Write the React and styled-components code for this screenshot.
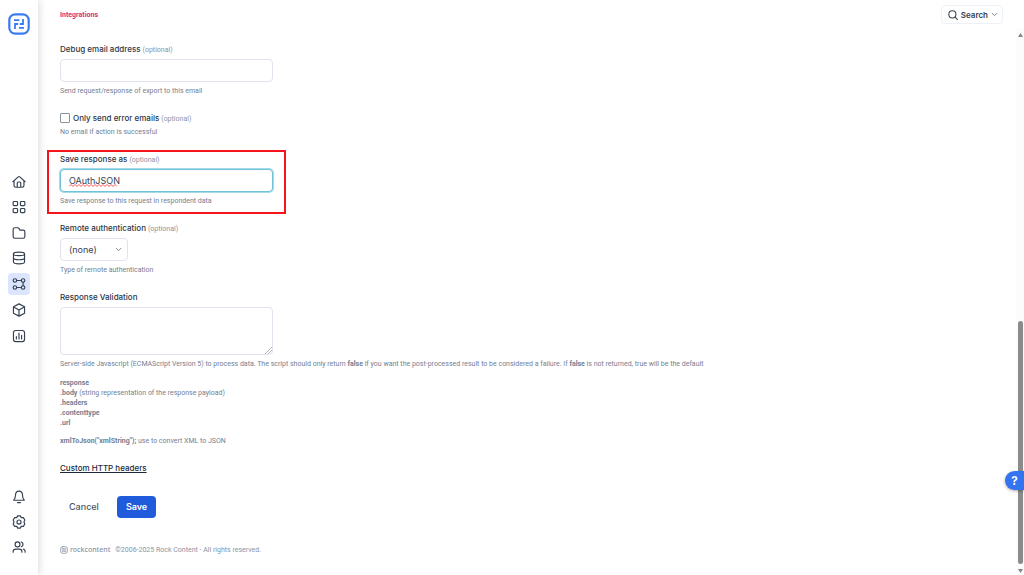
import styled, { createGlobalStyle, css } from "styled-components";

const GlobalStyle = createGlobalStyle`
  * {
    box-sizing: border-box;
  }
  body {
    margin: 0;
    background: #fff;
    color: #364152;
    font-family: Inter, "Liberation Sans", sans-serif;
    font-size: 9px;
    line-height: 12px;
  }
  button, input, select, textarea {
    font: inherit;
    color: inherit;
    margin: 0;
  }
`;

const smallText = css`
  font-family: Roboto, "Liberation Sans", sans-serif;
  font-size: 7px;
  line-height: 10px;
`;

const Page = styled.div`
  display: flex;
  min-height: 100vh;
`;

const Sidebar = styled.nav`
  display: flex;
  flex-direction: column;
  align-items: center;
  flex: none;
  width: 38px;
  padding: 13px 0 18px;
  box-shadow: 1px 0 8px rgba(16, 24, 40, 0.16);
`;

const NavGroup = styled.div`
  display: flex;
  flex-direction: column;
  gap: 4px;
  padding-top: 4px;
`;

const MainNav = styled(NavGroup)`
  justify-content: space-between;
  gap: 0;
  height: 175px;
  margin: auto 0;
  padding: 0;
`;

const NavLink = styled.a`
  display: flex;
  align-items: center;
  justify-content: center;
  width: 22px;
  height: ${(props) => (props.$active ? "22px" : "21px")};
  border-radius: 4px;
  color: #364152;
  background: ${(props) => (props.$active ? "#dbe6fe" : "transparent")};
`;

const Main = styled.div`
  display: flex;
  flex-direction: column;
  flex: 1;
  min-width: 0;
`;

const Header = styled.header`
  display: flex;
  justify-content: space-between;
  align-items: center;
  height: 28px;
  padding: 1px 21px 0 22px;
`;

const Crumb = styled.a`
  ${smallText}
  color: #d6307c;
  font-weight: 700;
  text-decoration: none;
`;

const SearchButton = styled.button`
  display: flex;
  align-items: center;
  gap: 3px;
  height: 19px;
  padding: 0 4px 0 6px;
  border: 1px solid #eef1f7;
  border-radius: 4px;
  background: #fff;
  font-size: 8px;
  font-weight: 600;
  svg:last-child {
    color: #697586;
  }
`;

const Body = styled.div`
  display: flex;
  flex: 1;
`;

const Content = styled.main`
  flex: 1;
  min-width: 0;
  padding: 15px 22px 0;
`;

const Form = styled.form`
  display: flex;
  flex-direction: column;
  align-items: flex-start;
  gap: 16px;
`;

const FieldBox = styled.div`
  position: relative;
  display: flex;
  flex-direction: column;
  align-items: flex-start;
  gap: 4px;
`;

const Label = styled.label`
  display: flex;
  align-items: baseline;
  gap: 2px;
  height: 12px;
  color: #2c3646;
  font-size: 8px;
  font-weight: 500;
`;

const Optional = styled.span`
  ${smallText}
  color: #8a94a6;
  font-weight: 400;
`;

const Help = styled.div`
  ${smallText}
  color: #748094;
`;

const control = css`
  border: 1px solid #dfe3ee;
  border-radius: 4px;
  background: #fff;
  outline: none;
`;

const Input = styled.input`
  ${control}
  grid-area: 1 / 1;
  width: 213px;
  height: 23px;
  padding: 0 8px;
  ${(props) =>
    props.$focused &&
    css`
      border-color: #6fc3d8;
      box-shadow: 0 0 0 1px #a5dae6;
    `}
`;

const SpellCheck = styled.div`
  display: grid;
  svg {
    grid-area: 1 / 1;
    align-self: end;
    margin: 0 0 5px 9px;
    pointer-events: none;
  }
`;

const TextArea = styled.textarea`
  ${control}
  display: block;
  width: 213px;
  height: 48px;
  padding: 4px 9px;
  resize: both;
  &::-webkit-resizer {
    background: linear-gradient(
      135deg,
      transparent 76%,
      #b4b8c0 76% 80%,
      transparent 80% 86%,
      #b4b8c0 86% 90%,
      transparent 90%
    );
  }
`;

const SelectWrap = styled.div`
  display: grid;
  align-items: center;
  svg {
    grid-area: 1 / 1;
    justify-self: end;
    margin-right: 6px;
    color: #697586;
    pointer-events: none;
  }
`;

const Select = styled.select`
  ${control}
  grid-area: 1 / 1;
  appearance: none;
  width: 68px;
  height: 23px;
  padding: 0 8px;
`;

const CheckRow = styled.div`
  display: flex;
  align-items: center;
  gap: 3px;
  height: 11px;
`;

const Checkbox = styled.input`
  appearance: none;
  width: 10px;
  height: 10px;
  border: 1px solid #8b93a1;
  border-radius: 1px;
  background: #fff;
`;

const Highlight = styled.div`
  position: absolute;
  inset: -3px -13px -8px;
  border: 2px solid #f5141c;
  pointer-events: none;
`;

const CodeHelp = styled(Help)`
  margin-top: 5px;
  p {
    margin: 0 0 8px;
  }
  p:last-child {
    margin: 0;
  }
`;

const TextLink = styled.a`
  color: #202939;
  font-size: 8px;
  font-weight: 500;
`;

const Actions = styled.div`
  display: flex;
  gap: 9px;
  margin-top: 6px;
`;

const Button = styled.button`
  height: 22px;
  padding: 0 9px;
  border: 0;
  border-radius: 4px;
  background: ${(props) => (props.$primary ? "#1f5bdb" : "transparent")};
  color: ${(props) => (props.$primary ? "#fff" : "#4b5565")};
  font-weight: ${(props) => (props.$primary ? 600 : 500)};
`;

const Footer = styled.footer`
  ${smallText}
  display: flex;
  align-items: center;
  gap: 5px;
  margin-top: 27px;
  color: #8a94a6;
`;

const Brand = styled.span`
  display: flex;
  align-items: center;
  gap: 2px;
  font-family: "Noto Sans", sans-serif;
  font-weight: 500;
`;

const ScrollBar = styled.div`
  display: flex;
  flex-direction: column;
  align-items: center;
  flex: none;
  width: 8px;
  padding: 5px 0 2px;
  background: #fcfcfc;
  color: #858585;
`;

const Thumb = styled.div`
  width: 5px;
  height: 243px;
  margin: auto 0 5px;
  border-radius: 3px;
  background: #8b8b8b;
`;

const HelpButton = styled.button`
  position: fixed;
  right: 0;
  bottom: 85px;
  width: 19px;
  height: 19px;
  padding: 0;
  border: 0;
  border-radius: 10px 0 0 10px;
  background: #3574f0;
  color: #fff;
  font-size: 12px;
  font-weight: 700;
  box-shadow: 0 1px 3px rgba(0, 0, 0, 0.35);
`;

const Icon = ({ size = 14, width = 2, children }) => (
  <svg
    width={size}
    height={size}
    viewBox="0 0 24 24"
    fill="none"
    stroke="currentColor"
    strokeWidth={width}
    strokeLinecap="round"
    strokeLinejoin="round"
    aria-hidden="true"
  >
    {children}
  </svg>
);

const Chevron = () => (
  <Icon size={7} width={3}>
    <path d="M4 8l8 8 8-8" />
  </Icon>
);

const Squiggle = () => (
  <svg width="48" height="3" viewBox="0 0 48 3" fill="none" aria-hidden="true">
    <path
      d="M0 2.500l2-2 2 2 2-2 2 2 2-2 2 2 2-2 2 2 2-2 2 2 2-2 2 2 2-2 2 2 2-2 2 2 2-2 2 2 2-2 2 2 2-2 2 2 2-2 2 2"
      stroke="#ef4444"
      strokeWidth="0.9"
    />
  </svg>
);

const Logo = () => (
  <svg width="22" height="22" viewBox="0 0 22 22" fill="none" aria-label="Home">
    <rect x="1.300" y="1.300" width="19.400" height="19.400" rx="6" stroke="#3b7bf2" strokeWidth="2.200" />
    <path
      d="M6 7.200H11.300M15 6V11H11.800M7 16V11H10.200M11 14.800H16"
      stroke="#3b7bf2"
      strokeWidth="1.800"
    />
  </svg>
);

const icons = {
  Home: (
    <path d="M9 21v-7.400c0-.900.600-1.600 1.600-1.600h2.800c1 0 1.600.700 1.600 1.600V21M3.500 10.400V18c0 2 .900 3 3 3h11c2.100 0 3-1 3-3v-7.600M1.500 11.500L10.700 3.300c.800-.700 1.800-.700 2.600 0l9.200 8.200" />
  ),
  Dashboard: (
    <>
      <rect x="2" y="2.500" width="7.500" height="7" rx="1.500" />
      <rect x="14.500" y="2.500" width="7.500" height="7" rx="1.500" />
      <rect x="2" y="14.500" width="7.500" height="7" rx="1.500" />
      <rect x="14.500" y="14.500" width="7.500" height="7" rx="1.500" />
    </>
  ),
  Folder: (
    <path d="M13.500 7l-1.300-2.500C11.600 3.400 10.900 3 9.600 3H4.500C2.800 3 2 3.800 2 5.500V18c0 2 1 3 3 3h14c2 0 3-1 3-3v-8c0-2-1-3-3-3z" />
  ),
  Database: (
    <>
      <ellipse cx="12" cy="5" rx="9.500" ry="3" />
      <path d="M2.500 5v14c0 1.660 4 3 9.500 3s9.500-1.340 9.500-3V5M2.500 12c0 1.660 4 3 9.500 3s9.500-1.340 9.500-3" />
    </>
  ),
  Integrations: (
    <>
      <circle cx="5" cy="6" r="3" />
      <circle cx="19" cy="6" r="3" />
      <circle cx="5" cy="18" r="3" />
      <circle cx="19" cy="18" r="3" />
      <path d="M8 6h8M8 18h8M19 9v6" />
    </>
  ),
  Products: (
    <path d="M12 1.500l9.500 5v11l-9.500 5-9.500-5v-11zM2.800 6.700L12 12l9.200-5.300M12 12v10" />
  ),
  Reports: (
    <>
      <rect x="2.500" y="2.500" width="19" height="19" rx="4" />
      <path d="M7.500 13v4M12 7v10M16.500 11v6" />
    </>
  ),
  Notifications: (
    <path d="M9.500 21.500h5M18 9c0-4-2.500-7-6-7S6 5 6 9c0 4-1 6-3 8.500h18C19 15 18 13 18 9z" />
  ),
  Settings: (
    <>
      <path d="M9.800 1.500h4.400l1.700 3 3.600 0 2.500 4L20.500 12l1.500 3.500-2.500 4-3.600 0-1.700 3H9.800l-1.700-3-3.600 0-2.500-4L3.500 12 2 8.500l2.500-4 3.600 0z" />
      <circle cx="12" cy="12" r="3.500" />
    </>
  ),
  Users: (
    <>
      <circle cx="9.500" cy="7.500" r="4.200" />
      <path d="M2 21v-1.500c0-2.500 2-4 4.500-4h6c2.500 0 4.500 1.500 4.500 4V21M16 3.500a4.200 4.200 0 0 1 0 8M22.500 21v-1.500c0-2-1.200-3.300-3-3.800" />
    </>
  ),
};

const NavItem = ({ name, active }) => (
  <NavLink href="#" aria-label={name} $active={active}>
    <Icon>{icons[name]}</Icon>
  </NavLink>
);

const Field = ({ id, label, optional, help, highlight, children }) => (
  <FieldBox>
    <Label htmlFor={id}>
      {label} {optional && <Optional>(optional)</Optional>}
    </Label>
    {children}
    <Help>{help}</Help>
    {highlight && <Highlight />}
  </FieldBox>
);

const App = () => {
  return (
    <>
      <GlobalStyle />
      <Page>
        <Sidebar>
          <Logo />
          <MainNav>
            <NavItem name="Home" />
            <NavItem name="Dashboard" />
            <NavItem name="Folder" />
            <NavItem name="Database" />
            <NavItem name="Integrations" active />
            <NavItem name="Products" />
            <NavItem name="Reports" />
          </MainNav>
          <NavGroup>
            <NavItem name="Notifications" />
            <NavItem name="Settings" />
            <NavItem name="Users" />
          </NavGroup>
        </Sidebar>
        <Main>
          <Header>
            <Crumb href="#">Integrations</Crumb>
            <SearchButton type="button">
              <Icon size={10} width={2.5}>
                <circle cx="10.500" cy="10.500" r="8.500" />
                <path d="M17 17l5.500 5.500" />
              </Icon>
              Search
              <Chevron />
            </SearchButton>
          </Header>
          <Body>
            <Content>
              <Form>
                <Field
                  id="debug-email"
                  label="Debug email address"
                  optional
                  help="Send request/response of export to this email"
                >
                  <Input id="debug-email" type="email" />
                </Field>
                <FieldBox>
                  <CheckRow>
                    <Checkbox id="only-errors" type="checkbox" />
                    <Label htmlFor="only-errors">
                      Only send error emails <Optional>(optional)</Optional>
                    </Label>
                  </CheckRow>
                  <Help>No email if action is successful</Help>
                </FieldBox>
                <Field
                  id="save-as"
                  label="Save response as"
                  optional
                  highlight
                  help="Save response to this request in respondent data"
                >
                  <SpellCheck>
                    <Input id="save-as" type="text" defaultValue="OAuthJSON" $focused />
                    <Squiggle />
                  </SpellCheck>
                </Field>
                <Field
                  id="remote-auth"
                  label="Remote authentication"
                  optional
                  help="Type of remote authentication"
                >
                  <SelectWrap>
                    <Select id="remote-auth">
                      <option>(none)</option>
                    </Select>
                    <Chevron />
                  </SelectWrap>
                </Field>
                <FieldBox>
                  <Label htmlFor="validation">Response Validation</Label>
                  <TextArea id="validation" />
                  <Help>
                    Server-side Javascript (ECMAScript Version 5) to process data. The script should
                    only return <b>false</b> if you want the post-processed result to be considered a
                    failure. If <b>false</b> is not returned, true will be the default
                  </Help>
                  <CodeHelp>
                    <p>
                      <b>response</b>
                      <br />
                      <b>.body</b> (string representation of the response payload)
                      <br />
                      <b>.headers</b>
                      <br />
                      <b>.contenttype</b>
                      <br />
                      <b>.url</b>
                    </p>
                    <p>
                      <b>xmlToJson("xmlString");</b> use to convert XML to JSON
                    </p>
                  </CodeHelp>
                </FieldBox>
                <TextLink href="#">Custom HTTP headers</TextLink>
                <Actions>
                  <Button type="button">Cancel</Button>
                  <Button type="submit" $primary>
                    Save
                  </Button>
                </Actions>
              </Form>
              <Footer>
                <Brand>
                  <Icon size={8} width={2.5}>
                    <rect x="2" y="2" width="20" height="20" rx="6" />
                    <path d="M7 8h4M14 8h3M7 12h10M7 16h3M13 16h4" />
                  </Icon>
                  rockcontent
                </Brand>
                ©2006-2025 Rock Content - All rights reserved.
              </Footer>
            </Content>
            <ScrollBar>
              <svg width="5" height="4" viewBox="0 0 5 4" fill="currentColor" aria-hidden="true">
                <path d="M2.500 0L5 4H0z" />
              </svg>
              <Thumb />
              <svg width="5" height="4" viewBox="0 0 5 4" fill="currentColor" aria-hidden="true">
                <path d="M0 0h5L2.500 4z" />
              </svg>
            </ScrollBar>
          </Body>
        </Main>
      </Page>
      <HelpButton type="button">?</HelpButton>
    </>
  );
};

export default App;
